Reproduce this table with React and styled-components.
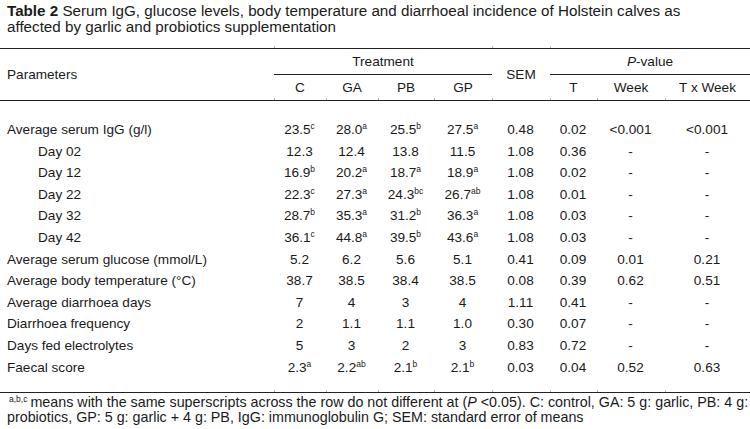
import React from "react";
import styled, { createGlobalStyle, css } from "styled-components";

const Global = createGlobalStyle`
  html, body { margin: 0; padding: 0; background: #fff; }
  body { font-family: "Liberation Sans", Arial, sans-serif; color: #1a1a1a; }
`;

const Page = styled.div`
  width: 750px;
  height: 429px;
  overflow: hidden;
  background: #fff;
`;

const Title = styled.div`
  padding: 3px 0 0 7px;
  font-size: 15.2px;
  line-height: 16px;
  height: 48px;
  box-sizing: border-box;
  white-space: nowrap;
  b { font-weight: bold; }
`;

const Table = styled.table`
  width: 750px;
  border-collapse: collapse;
  table-layout: fixed;
  font-size: 13.6px;
`;

const tickBase = css`
  content: "";
  position: absolute;
  left: 0;
  width: 1px;
  height: 2px;
  background: #b8b8b8;
`;

const Th = styled.th`
  position: relative;
  font-weight: normal;
  text-align: ${(p) => (p.$left ? "left" : "center")};
  padding: 0 0 0 ${(p) => (p.$left ? "7px" : "0")};
  height: 25px;
  vertical-align: middle;
  border-top: ${(p) => (p.$top ? "1px solid #222" : "none")};
  border-bottom: ${(p) => (p.$rule ? "1px solid #222" : "none")};
  ${(p) =>
    p.$tickTop &&
    css`
      &::before { ${tickBase} top: -3px; }
    `}
  ${(p) =>
    p.$tickBottom &&
    css`
      &::after { ${tickBase} bottom: 0; }
    `}
`;

const Row = styled.tr`
  td {
    padding-top: ${(p) => (p.$first ? "18px" : "0")};
    padding-bottom: ${(p) => (p.$last ? "14px" : "0")};
    border-bottom: ${(p) => (p.$last ? "1px solid #222" : "none")};
  }
`;

const Td = styled.td`
  position: relative;
  line-height: 21.6px;
  height: 21.6px;
  text-align: ${(p) => (p.$left ? "left" : "center")};
  padding-left: ${(p) => (p.$indent ? "38px" : p.$left ? "7px" : "0")};
  white-space: nowrap;
  vertical-align: top;
  ${(p) =>
    p.$tick &&
    css`
      &::after { ${tickBase} bottom: 0; }
    `}
`;

const Sup = styled.sup`
  font-size: 8.5px;
  line-height: 0;
  vertical-align: baseline;
  position: relative;
  top: -5px;
`;

const Footnote = styled.div`
  padding: 2px 0 0 7px;
  font-size: 14.3px;
  line-height: 14.5px;
  white-space: nowrap;
  sup {
    font-size: 8.5px;
    line-height: 0;
    vertical-align: baseline;
    position: relative;
    top: -5px;
    margin-right: 3px;
    margin-left: 2px;
  }
`;

const cols = [274, 52, 52, 56, 58, 58, 47, 68, 85];

const rows = [
  ["Average serum IgG (g/l)", false, [["23.5", "c"], ["28.0", "a"], ["25.5", "b"], ["27.5", "a"], "0.48", "0.02", "<0.001", "<0.001"]],
  ["Day 02", true, ["12.3", "12.4", "13.8", "11.5", "1.08", "0.36", "-", "-"]],
  ["Day 12", true, [["16.9", "b"], ["20.2", "a"], ["18.7", "a"], ["18.9", "a"], "1.08", "0.02", "-", "-"]],
  ["Day 22", true, [["22.3", "c"], ["27.3", "a"], ["24.3", "bc"], ["26.7", "ab"], "1.08", "0.01", "-", "-"]],
  ["Day 32", true, [["28.7", "b"], ["35.3", "a"], ["31.2", "b"], ["36.3", "a"], "1.08", "0.03", "-", "-"]],
  ["Day 42", true, [["36.1", "c"], ["44.8", "a"], ["39.5", "b"], ["43.6", "a"], "1.08", "0.03", "-", "-"]],
  ["Average serum glucose (mmol/L)", false, ["5.2", "6.2", "5.6", "5.1", "0.41", "0.09", "0.01", "0.21"]],
  ["Average body temperature (°C)", false, ["38.7", "38.5", "38.4", "38.5", "0.08", "0.39", "0.62", "0.51"]],
  ["Average diarrhoea days", false, ["7", "4", "3", "4", "1.11", "0.41", "-", "-"]],
  ["Diarrhoea frequency", false, ["2", "1.1", "1.1", "1.0", "0.30", "0.07", "-", "-"]],
  ["Days fed electrolytes", false, ["5", "3", "2", "3", "0.83", "0.72", "-", "-"]],
  ["Faecal score", false, [["2.3", "a"], ["2.2", "ab"], ["2.1", "b"], ["2.1", "b"], "0.03", "0.04", "0.52", "0.63"]],
];

const Value = ({ v }) =>
  Array.isArray(v) ? (
    <>
      {v[0]}
      <Sup>{v[1]}</Sup>
    </>
  ) : (
    v
  );

export default function App() {
  return (
    <Page>
      <Global />
      <Title>
        <b>Table 2</b> Serum IgG, glucose levels, body temperature and diarrhoeal incidence of Holstein calves as
        <br />
        affected by garlic and probiotics supplementation
      </Title>
      <Table>
        <colgroup>
          {cols.map((w, i) => (
            <col key={i} style={{ width: w }} />
          ))}
        </colgroup>
        <thead>
          <tr>
            <Th rowSpan={2} $left $top $rule>Parameters</Th>
            <Th colSpan={4} $top $rule $tickTop>Treatment</Th>
            <Th rowSpan={2} $top $rule $tickTop $tickBottom>SEM</Th>
            <Th colSpan={3} $top $rule $tickTop>
              <i>P</i>-value
            </Th>
          </tr>
          <tr>
            <Th $rule $tickBottom>C</Th>
            <Th $rule $tickBottom>GA</Th>
            <Th $rule $tickBottom>PB</Th>
            <Th $rule $tickBottom>GP</Th>
            <Th $rule $tickBottom>T</Th>
            <Th $rule $tickBottom>Week</Th>
            <Th $rule $tickBottom>T x Week</Th>
          </tr>
        </thead>
        <tbody>
          {rows.map(([label, indent, vals], i) => (
            <Row key={label} $first={i === 0} $last={i === rows.length - 1}>
              <Td $left $indent={indent}>{label}</Td>
              {vals.map((v, j) => (
                <Td key={j} $tick={i === rows.length - 1}>
                  <Value v={v} />
                </Td>
              ))}
            </Row>
          ))}
        </tbody>
      </Table>
      <Footnote>
        <sup>a,b,c</sup>means with the same superscripts across the row do not different at (<i>P</i> &lt;0.05). C: control, GA: 5 g: garlic, PB: 4 g:
        <br />
        probiotics, GP: 5 g: garlic + 4 g: PB, IgG: immunoglobulin G; SEM: standard error of means
      </Footnote>
    </Page>
  );
}
